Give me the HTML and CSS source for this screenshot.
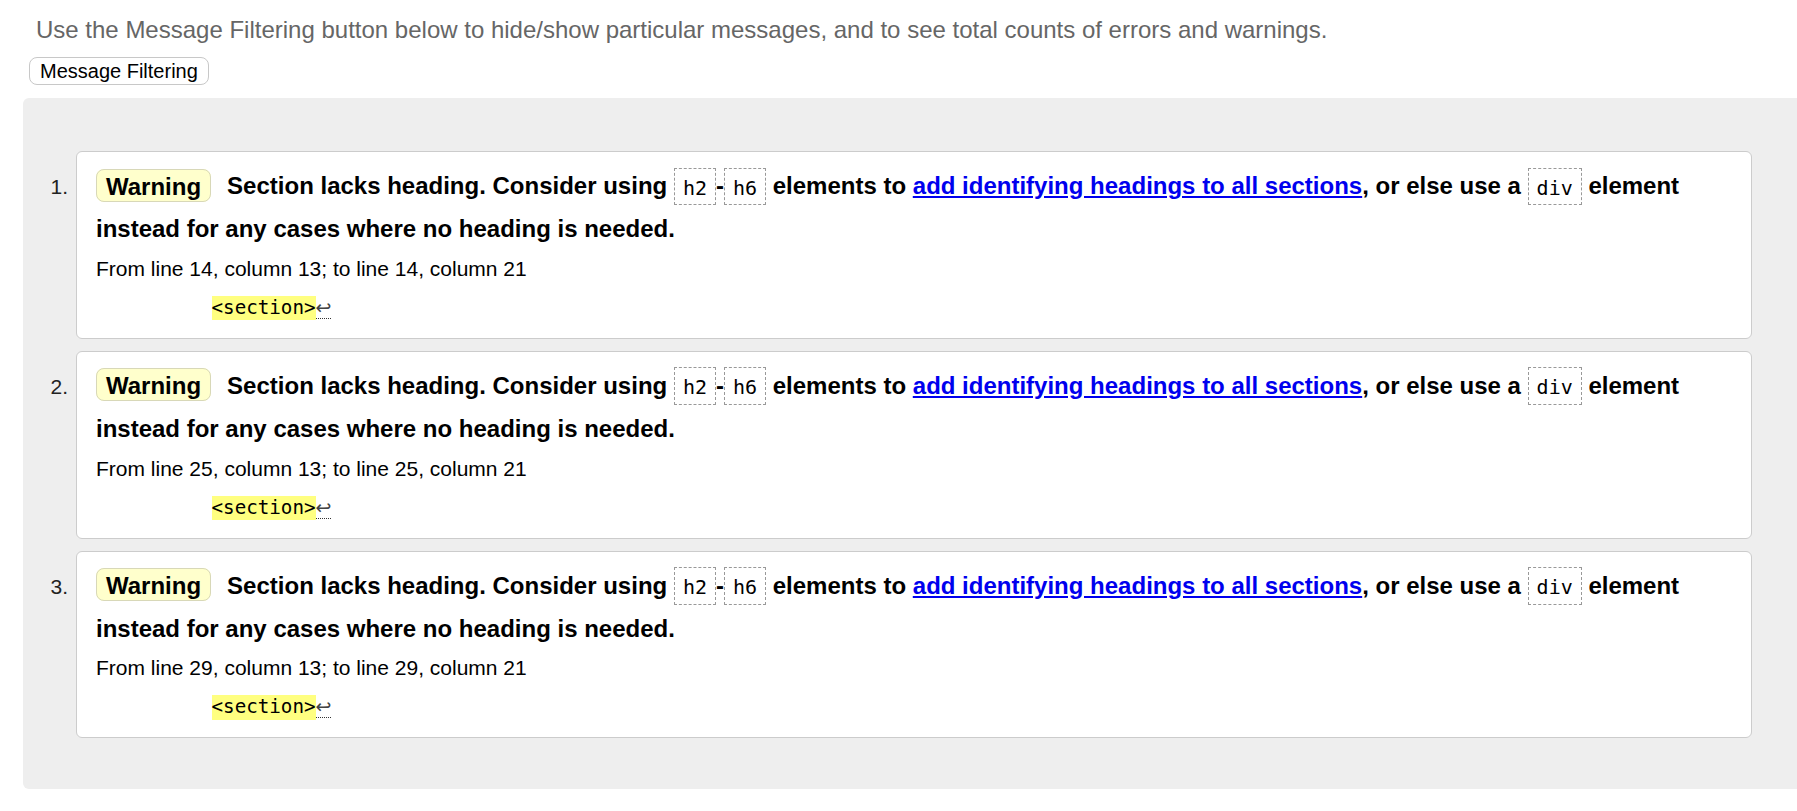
FILE: index.html
```html
<!DOCTYPE html>
<html lang="en">
<head>
<meta charset="utf-8">
<title>Nu Html Checker results</title>
<link rel="stylesheet" href="styles.css">
</head>
<body>
<p class="intro">Use the Message Filtering button below to hide/show particular messages, and to see total counts of errors and warnings.</p>
<div class="filter-row"><button class="filter-btn" type="button">Message Filtering</button></div>
<div class="results">
  <ol class="messages">
    <li class="item">
      <span class="num">1.</span>
      <div class="card">
        <p class="msg"><strong class="badge">Warning</strong>Section lacks heading. Consider using <code class="tag">h2</code>-<code class="tag">h6</code> elements to <a href="#">add identifying headings to all sections</a>, or else use a <code class="tag">div</code> element instead for any cases where no heading is needed.</p>
        <p class="location">From line 14, column 13; to line 14, column 21</p>
        <p class="extract"><code class="src">          <b class="hl">&lt;section&gt;</b><span class="lf">↩</span></code></p>
      </div>
    </li>
    <li class="item">
      <span class="num">2.</span>
      <div class="card">
        <p class="msg"><strong class="badge">Warning</strong>Section lacks heading. Consider using <code class="tag">h2</code>-<code class="tag">h6</code> elements to <a href="#">add identifying headings to all sections</a>, or else use a <code class="tag">div</code> element instead for any cases where no heading is needed.</p>
        <p class="location">From line 25, column 13; to line 25, column 21</p>
        <p class="extract"><code class="src">          <b class="hl">&lt;section&gt;</b><span class="lf">↩</span></code></p>
      </div>
    </li>
    <li class="item">
      <span class="num">3.</span>
      <div class="card">
        <p class="msg"><strong class="badge">Warning</strong>Section lacks heading. Consider using <code class="tag">h2</code>-<code class="tag">h6</code> elements to <a href="#">add identifying headings to all sections</a>, or else use a <code class="tag">div</code> element instead for any cases where no heading is needed.</p>
        <p class="location">From line 29, column 13; to line 29, column 21</p>
        <p class="extract"><code class="src">          <b class="hl">&lt;section&gt;</b><span class="lf">↩</span></code></p>
      </div>
    </li>
  </ol>
</div>
</body>
</html>
```

FILE: styles.css
```css
html, body {
  margin: 0;
  padding: 0;
  background: #fff;
}
body {
  font-family: "Liberation Sans", Arial, sans-serif;
  color: #000;
}
.intro {
  margin: 0;
  padding: 18px 0 0 36px;
  font-size: 24px;
  line-height: 24px;
  color: #666;
}
.filter-row {
  padding: 15px 0 0 29px;
  height: 28px;
}
.filter-btn {
  display: block;
  box-sizing: border-box;
  height: 28px;
  margin: 0;
  padding: 0 10px;
  font-family: "Liberation Sans", Arial, sans-serif;
  font-size: 20px;
  line-height: 24px;
  color: #000;
  background: #fff;
  border: 1px solid #c8c8c8;
  border-radius: 8px;
}
.results {
  margin: 13px 0 0 23px;
  padding: 53px 45px 51px 0;
  background: #eee;
  border-radius: 6px 0 0 6px;
}
.messages {
  list-style: none;
  margin: 0;
  padding: 0;
}
.item {
  display: flex;
  align-items: baseline;
  margin-bottom: 12px;
}
.item:last-child {
  margin-bottom: 0;
}
.num {
  flex: 0 0 45px;
  margin-right: 8px;
  text-align: right;
  font-size: 21px;
  line-height: 24px;
  color: #222;
}
.card {
  flex: 1;
  min-width: 0;
  background: #fff;
  border: 1px solid #ccc;
  border-radius: 6px;
  padding: 12px 19px 15px 19px;
}
.msg {
  margin: 0;
  font-size: 24px;
  font-weight: bold;
  line-height: 43.4px;
}
.badge {
  padding: 2.5px 9px 1.5px;
  margin-right: 16px;
  background: #ffffcc;
  border: 1px solid #d8d8b8;
  border-radius: 8px;
}
.tag {
  font-family: "DejaVu Sans Mono", "Liberation Mono", monospace;
  font-weight: normal;
  font-size: 20px;
  line-height: 20px;
  padding: 6.5px 8px 5px;
  border: 1px dashed #999;
}
.msg a {
  color: #0000ee;
  text-decoration: underline;
}
.location {
  margin: 0;
  font-size: 21px;
  line-height: 36px;
}
.extract {
  margin: 6px 0 0;
  font-family: "DejaVu Sans Mono", "Liberation Mono", monospace;
  font-size: 19.2px;
  line-height: 30px;
}
.src {
  font-family: inherit;
  white-space: pre;
}
.hl {
  font-weight: normal;
  background: #ffff80;
  padding-bottom: 1.5px;
}
.lf {
  font-family: "DejaVu Sans", sans-serif;
  font-size: 19px;
  line-height: 1;
  color: #444;
  border-bottom: 1px dotted #333;
}
```
